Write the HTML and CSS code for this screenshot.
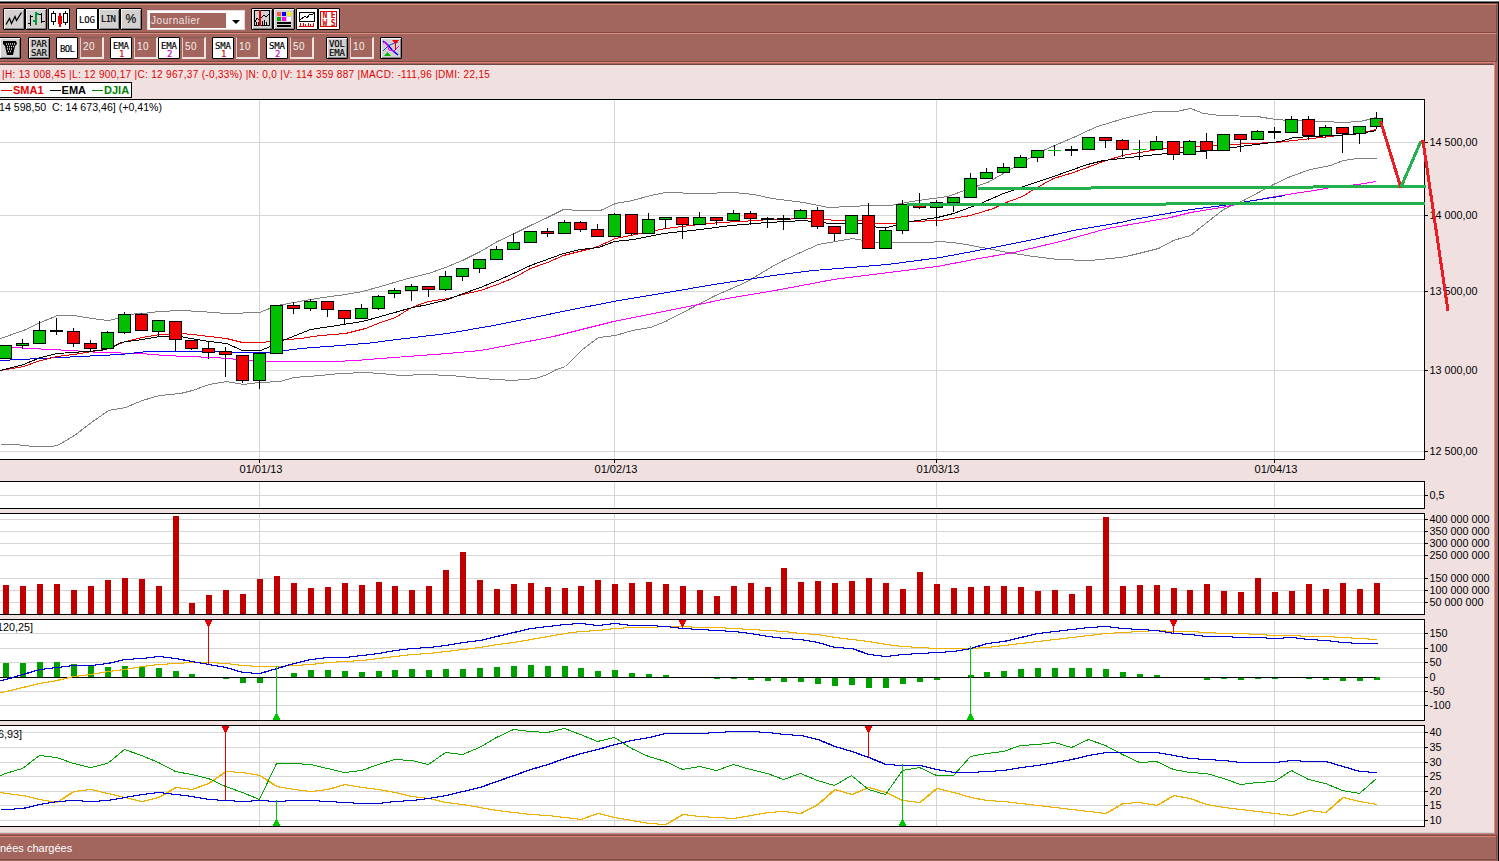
FILE: index.html
```html
<!DOCTYPE html>
<html lang="fr">
<head>
<meta charset="utf-8">
<title>DJIA - Journalier</title>
<link rel="stylesheet" href="styles.css">
</head>
<body>
<div class="window">
  <div class="app">
    <div class="toolbar toolbar-main">
      <button class="btn g3"><svg viewBox="0 0 22 22"><path class="ln" d="M3 16.500 6.500 10.500 8.500 15.500 12 8.500 13.500 12.500 18.500 4.500"/></svg></button>
      <button class="btn"><svg viewBox="0 0 22 22" shape-rendering="crispEdges"><path class="s1" d="M5.500 7v11M3 15.500h3M6 8.500h2M16.500 5v10M14 6.500h3M17 13.500h3"/><path class="sg" d="M11 4v13M8 13h3M11 6h3"/></svg></button>
      <button class="btn on g1"><svg viewBox="0 0 22 22" shape-rendering="crispEdges"><path class="s1" d="M5.500 3v14M17.500 3v14"/><path class="sr" d="M11.500 5v14"/><path class="bx" d="M3.500 5.500h4v8h-4zM15.500 5.500h4v9h-4z"/><path class="fr" d="M10 8h4v8h-4z"/></svg></button>
      <button class="btn on g6"><svg viewBox="0 0 22 22"><text x="3" y="15" textLength="16">LOG</text></svg></button>
      <button class="btn"><svg viewBox="0 0 22 22"><text x="3" y="14" textLength="15">LIN</text></svg></button>
      <button class="btn"><svg viewBox="0 0 22 22"><text class="pct" x="5.500" y="15">%</text></svg></button>
      <div class="select"><span>Journalier</span><i></i></div>
      <button class="btn g6"><svg viewBox="0 0 22 22" shape-rendering="crispEdges"><path class="s1" d="M3.500 2.500h15v15h-15z"/><path class="s1" d="M4 13.500 6 10 8 12 13 7 15 9 18 6M5.500 17v-3M7.500 17v-3M11.500 17v-4M13.500 17v-5M15.500 17v-3"/><path class="sr" d="M9 2v16"/></svg></button>
      <button class="btn"><svg viewBox="0 0 22 22" shape-rendering="crispEdges"><path d="M4 4h4v4H4z" fill="#f55"/><path d="M9 4h4v4H9z" fill="#00f"/><path d="M14 4h4v4h-4z" fill="#f5f400"/><path d="M4 9h4v4H4z" fill="#0a0"/><path d="M9 9h4v4H9z" fill="#f0f"/><path d="M14 9h4v4h-4z" fill="#fff"/><path class="s2" d="M4 15h14M4 18h14"/></svg></button>
      <button class="btn on g1"><svg viewBox="0 0 22 22" shape-rendering="crispEdges"><path class="bx" d="M3.500 4.500h15v9h-15z"/><path class="s1" d="M4 12 9 8 11 10 14 6 16 7 18 5"/><path class="srn" d="M3 18.500h15M4.500 18v-3M7.500 18v-3M9.500 18v-2M12.500 18v-3M14.500 18v-2M17.500 18v-3"/></svg></button>
      <button class="btn on"><svg viewBox="0 0 22 22"><path class="srn" shape-rendering="crispEdges" d="M2.500 3.500h16v15h-16z"/><text class="news" x="4.500" y="10" textLength="13">NE</text><text class="news" x="4.500" y="17.500" textLength="13">WS</text></svg></button>
    </div>
    <div class="toolbar toolbar-indicators">
      <button class="btn"><svg viewBox="0 0 22 22"><path d="M4 4h13l1 3-2 2-2 9H8L6 9 4 7z" fill="#000"/><path d="M7 7h9M8 9.500h7M8 12h6M9 14.500h4" stroke="#ddd" stroke-width="1.300" stroke-dasharray="1 1"/></svg></button>
      <button class="btn"><svg viewBox="0 0 22 22"><text x="3" y="10" textLength="16">PAR</text><text x="3" y="19" textLength="16">SAR</text></svg></button>
      <button class="btn on g6"><svg viewBox="0 0 22 22"><text x="4" y="15" textLength="15">BOL</text></svg></button>
      <span class="num g2">20</span>
      <button class="btn on g6"><svg viewBox="0 0 22 22"><text x="3" y="12" textLength="16">EMA</text><text class="r" x="9" y="20">1</text></svg></button>
      <span class="num g2">10</span>
      <button class="btn on"><svg viewBox="0 0 22 22"><text x="3" y="12" textLength="16">EMA</text><text class="p" x="9" y="20">2</text></svg></button>
      <span class="num g2">50</span>
      <button class="btn on g6"><svg viewBox="0 0 22 22"><text x="3" y="12" textLength="16">SMA</text><text class="r" x="9" y="20">1</text></svg></button>
      <span class="num g2">10</span>
      <button class="btn on g6"><svg viewBox="0 0 22 22"><text x="3" y="12" textLength="16">SMA</text><text class="p" x="9" y="20">2</text></svg></button>
      <span class="num g2">50</span>
      <button class="btn g12"><svg viewBox="0 0 22 22"><text x="3" y="10" textLength="16">VOL</text><text x="3" y="19" textLength="16">EMA</text></svg></button>
      <span class="num g2">10</span>
      <button class="btn g6"><svg viewBox="0 0 22 22"><path d="M3 4 8 8 12 13 18 18" fill="none" stroke="#00f" stroke-width="1.500"/><path d="M3 14 8 9 12 7 18 5" fill="none" stroke="#24c" stroke-width="1"/><path d="M3 6 6 5 9 13 14 14 19 9" fill="none" stroke="#f0f"/><path d="M12 3h7l-3.500 4z" fill="#e00"/><path d="M15.500 6v7" stroke="#e00"/><path d="M4 19h7l-3.500-4z" fill="#0b0"/></svg></button>
    </div>
    <main class="charts">
      <p class="quote">|H: 13 008,45 |L: 12 900,17 |C: 12 967,37 (-0,33%) |N: 0,0 |V: 114 359 887 |MACD: -111,96 |DMI: 22,15</p>
      <div class="legend"><span class="k sma">SMA1</span><span class="k ema">EMA</span><span class="k djia">DJIA</span></div>
      <svg class="panel" id="price" width="1490" height="378" viewBox="0 99 1490 378"></svg>
      <svg class="panel" id="news" width="1490" height="28" viewBox="0 481 1490 28"></svg>
      <svg class="panel" id="volume" width="1490" height="102" viewBox="0 513 1490 102"></svg>
      <svg class="panel" id="macd" width="1490" height="102" viewBox="0 619 1490 102"></svg>
      <svg class="panel" id="dmi" width="1490" height="102" viewBox="0 725 1490 102"></svg>
    </main>
    <footer class="status">nées chargées</footer>
  </div>
</div>
<script src="chart.js"></script>
</body>
</html>
```
FILE: styles.css
```css
* { box-sizing: border-box; }
body { margin: 0; background: #a2665e; font-family: "Liberation Sans", Arial, sans-serif; font-size: 10px; overflow: hidden; }
.window { width: 1499px; height: 861px; overflow: hidden; border-top: 1px solid #fff; background: #000; padding: 2px 1px 0 0; box-shadow: inset 0 1px #777; }
.app { display: flex; flex-direction: column; height: 858px; border-top: 1px solid #7a4a44; background: #a2665e; padding-right: 1px; }
.toolbar { display: flex; flex: none; align-items: flex-start; height: 29px; padding-top: 3px; border-top: 1px solid #e38d7e; border-bottom: 1px solid #7a4a44; border-right: 1px solid #7a4a44; }
.btn { width: 22px; height: 22px; flex: none; padding: 0; border: 1px solid #000; border-radius: 1px; background: #d4d0d0; box-shadow: inset 1px 1px #f4f4f4, inset -1px -1px #8a8a8a; }
.btn.on { background: #fff; box-shadow: none; }
.btn svg { display: block; width: 22px; height: 22px; margin: -1px; }
.btn text { font-family: "DejaVu Sans Mono", monospace; font-size: 9px; fill: #000; stroke: #000; stroke-width: .15px; }
.btn .pct { font-family: "Liberation Sans", Arial, sans-serif; font-size: 12px; }
.btn .news { font-size: 8px; font-weight: bold; fill: #e00000; stroke: none; }
.btn .r { fill: #e00000; stroke: #e00000; }
.btn .p { fill: #c000c0; stroke: #c000c0; }
.ln, .s1, .bx { fill: none; stroke: #000; stroke-width: 1; }
.ln { stroke-width: 1.3; }
.s2 { stroke: #000; stroke-width: 2; }
.bx { fill: #fff; }
.fr { fill: #e00000; }
.sg { fill: none; stroke: #009a3c; stroke-width: 2; }
.sr { fill: none; stroke: #e00000; stroke-width: 2; }
.srn { fill: none; stroke: #e00000; }
.g1 { margin-left: 1px; }
.g2 { margin-left: 2px; }
.g3 { margin-left: 3px; }
.g6 { margin-left: 6px; }
.g12 { margin-left: 12px; }
.select { display: flex; align-items: center; justify-content: space-between; width: 98px; height: 20px; margin: 2px 0 0 5px; padding: 1px 4px 1px 2px; background: #fff; border: 1px solid #e4dada; }
.select span { width: 76px; height: 15px; padding-left: 1px; background: #a2665e; color: #f2e4e2; line-height: 15px; letter-spacing: .55px; }
.select i { border: 4px solid transparent; border-top-color: #000; border-bottom: 0; margin-top: 3px; }
.num { width: 24px; height: 22px; flex: none; border: 2px solid #efe2e0; border-top: 1px solid #8b5750; border-left: 1px solid #e0c8c4; background: #a2665e; color: #f8eeec; line-height: 18px; padding-left: 2px; letter-spacing: .4px; }
.toolbar-indicators .btn:first-child { margin-left: -1px; }
.toolbar-indicators .btn:nth-child(2) { margin-left: 7px; }
.charts { display: flex; flex: none; flex-direction: column; height: 772px; border-top: 1px solid #e38078; border-right: 1px solid #e38d7e; border-bottom: 1px solid #c98078; background: #f0e0e0; box-shadow: inset 0 1px #a2665e, inset 0 2px #6e4640, inset 0 -1px #cfd6d8; padding-top: 3px; width: 1495px; }
.quote { margin: 0; flex: none; height: 16px; padding-left: 2px; line-height: 18px; color: #e00000; white-space: pre; letter-spacing: .32px; }
.legend { display: flex; flex: none; align-items: center; width: 132px; height: 16px; margin-bottom: 1px; border: 1px solid #000; border-left: 0; background: #fff; font-weight: bold; font-size: 11px; }
.k { display: flex; align-items: center; gap: 1px; margin-left: 1px; }
.k + .k { margin-left: 6px; }
.k::before { content: ""; width: 11px; height: 1px; background: currentColor; }
.sma { color: #e80000; }
.ema { color: #000; }
.djia { color: #008000; }
.panel { display: block; flex: none; overflow: visible; margin-bottom: 4px; }
.panel text { font-size: 10px; fill: #000; white-space: pre; }
.status { flex: none; height: 25px; margin-top: 1px; border-top: 1px solid #7a4a44; border-right: 1px solid #7a4a44; border-bottom: 1px solid #7a4a44; box-shadow: inset 0 1px #e38078; color: #fff; font-size: 11px; line-height: 24px; }
```
FILE: chart.js
```js
const NS = 'http://www.w3.org/2000/svg';
const cx = i => Math.floor(5.85 + 16.916 * i);
const RIGHT = 1424;
const DATES = [[15, '01/01/13'], [36, '01/02/13'], [55, '01/03/13'], [75, '01/04/13']];

function add(svg, tag, attrs, text) {
  const el = document.createElementNS(NS, tag);
  for (const k in attrs) el.setAttribute(k, attrs[k]);
  if (text !== undefined) el.textContent = text;
  svg.appendChild(el);
  return el;
}
const rect = (svg, x, y, w, h, fill) => add(svg, 'rect', { x, y, width: w, height: h, fill, 'shape-rendering': 'crispEdges' });
const line = (svg, pts, stroke, w = 1) => add(svg, 'polyline', {
  points: pts.map(p => p[0] + .5 + ',' + (Math.round(p[1]) + .5)).join(' '),
  fill: 'none', stroke, 'stroke-width': w, 'shape-rendering': 'crispEdges' });
const pairs = s => s.trim().split(/\s+/).map(p => p.split(',').map(Number));
const nums = s => s.trim().split(/\s+/).map(Number);

// Width of an axis label in pixels
const labelWidth = t => [...t].reduce((n, c) => n + (/\d/.test(c) ? 6 : 3), 0);

function grid(svg, top, bottom, rows) {
  rect(svg, 0, top, RIGHT, bottom - top, '#fff');
  for (const [y] of rows) rect(svg, 0, y, RIGHT, 1, '#d6d6d6');
  for (const [i] of DATES) rect(svg, cx(i), top, 1, bottom - top, '#d6d6d6');
}
function frame(svg, top, bottom, rows) {
  rect(svg, 0, top, RIGHT + 1, 1, '#000');
  rect(svg, 0, bottom, RIGHT + 1, 1, '#000');
  rect(svg, RIGHT, top, 1, bottom - top, '#000');
  for (const [y, t] of rows) {
    rect(svg, RIGHT, y, 4, 1, '#000');
    add(svg, 'text', { x: 1429.5, y: y + 4, textLength: labelWidth(t), lengthAdjust: 'spacingAndGlyphs' }, t);
  }
}
function series(svg, first, ys, color, heavy) {
  const pts = nums(ys).map((y, i) => [cx(i), y]);
  pts.unshift([0, first]);
  line(svg, pts, color);
  if (heavy) line(svg, pts.map(([x, y]) => [x + 1, y]), color);
}
function sell(svg, i, top, end) {
  const x = cx(i);
  rect(svg, x, top, 1, end - top, '#e00000');
  add(svg, 'path', { d: `M${x - 3} ${top}h7v2h-1v2h-1v2h-3v-2h-1v-2h-1z`, fill: '#e80000', 'shape-rendering': 'crispEdges' });
}
function buy(svg, i, start, bottom) {
  const x = cx(i);
  rect(svg, x, start, 1, bottom - start, '#00c800');
  add(svg, 'path', { d: `M${x - 3} ${bottom}h7v-2h-1v-2h-1v-2h-3v2h-1v2h-1z`, fill: '#00c800', 'shape-rendering': 'crispEdges' });
}

/* ---- price ---- */
const price = document.getElementById('price');
const priceRows = [[142, '14 500,00'], [215, '14 000,00'], [291, '13 500,00'], [370, '13 000,00'], [451, '12 500,00']];
grid(price, 99, 459, priceRows);

line(price, pairs(`0,338 23,330 40,322 57,315 74,315 91,318 108,320 117,318 125,314 142,313 159,311 180,310 200,311 226,313 259,312 277,305 310,299 330,296 345,294 362,291 380,286 411,277 428,273 445,267 462,260 480,251 497,241 514,233 530,225 547,217 563,209 580,210 600,210 615,203 632,200 650,195 665,192 700,193 733,192 753,194 772,198 803,202 828,207 870,205 890,205 911,201 947,196 970,188 987,182 1003,173 1022,162 1030,157 1043,150 1054,145 1073,137 1088,130 1097,126 1120,119 1135,115 1154,111 1176,111 1190,108 1203,113 1220,115 1257,116 1275,119 1290,120 1325,121 1342,122 1360,121 1376,117`), '#808080');
line(price, pairs(`0,444 15,444 33,446 50,446 57,445 74,435 91,422 108,410 125,407 142,400 159,395 180,393 192,390 209,384 226,381 243,384 259,382 280,381 293,377 320,375 340,373 365,372 380,373 400,375 425,374 450,375 480,378 512,380 535,378 547,374 556,369 565,366 582,349 598,337 615,335 632,330 650,327 665,321 692,307 715,295 745,282 752,278 770,267 783,260 800,252 818,244 835,241 852,238 863,240 871,242 927,242 940,241 960,243 987,248 1007,252 1033,256 1057,259 1090,260 1120,257 1130,255 1158,248 1173,240 1190,235 1200,227 1223,209 1243,200 1273,184 1290,176 1310,169 1330,165 1343,160 1357,158 1376,158`), '#808080');
line(price, pairs(`0,346 30,348 70,350 100,352 140,353 165,355 185,356 215,357 238,359 250,360 272,361 335,361 355,360 380,358 447,353 480,350 507,345 553,336 593,326 613,321 653,313 693,305 727,298 780,289 833,279 937,266 973,259 1013,252 1060,241 1107,228 1170,217 1190,212 1227,206 1247,201 1287,194 1320,189 1330,187 1357,184 1376,181`), '#f0f');
line(price, pairs(`0,360 60,357 120,354 147,351 180,351 270,352 300,348 340,345 375,342 380,341 447,333 493,325 533,317 567,310 613,301 673,291 713,284 747,279 773,275 813,270 887,264 940,257 993,247 1033,239 1073,230 1120,222 1133,219 1190,209 1223,205 1253,200 1285,195`), '#0000e8');
line(price, pairs(`0,370 23,366 40,360 57,356 80,353 98,350 108,348 117,344 125,341 142,337 159,334 180,333 192,334 226,338 242,342 262,342 276,340 300,338 320,335 345,333 365,328 380,322 395,317 411,307 428,301 448,298 462,294 480,290 497,284 514,277 530,268 547,262 563,255 595,247 615,238 640,233 665,228 690,225 720,222 740,221 770,219 787,219 800,217 820,219 840,220 860,220 873,223 893,223 910,221 940,220 970,215 993,208 1003,203 1022,196 1033,189 1053,178 1073,172 1103,161 1122,155 1140,152 1157,149 1180,147 1220,145 1247,143 1277,142 1293,140 1320,137 1347,134 1360,133 1376,129`), '#e80000');
line(price, pairs(`0,370 23,364 40,357 57,353 100,350 112,347 120,342 142,339 159,336 180,336 190,338 209,341 226,343 242,350 260,350 270,346 285,339 310,329 330,326 362,321 380,316 412,307 428,304 447,299 463,293 480,287 497,280 513,273 530,265 563,253 580,249 598,247 614,241 633,239 663,233 700,229 730,225 767,222 787,221 803,220 830,223 863,223 877,227 887,227 910,221 937,217 953,213 980,203 1003,193 1023,186 1053,176 1087,164 1103,160 1147,155 1167,153 1213,150 1247,145 1280,141 1293,137 1353,134 1376,130`), '#000');

// index: colour, high, body top, body bottom, low  (g = up, r = down, d = doji, t = flat up day)
const candles = `g345,345,359,359 g339,343,346,349 g321,330,344,344 d318,330,332,335 r328,331,344,347 r340,343,349,352 g331,332,349,349 g312,314,333,334 r313,314,331,331 g320,320,332,336 r321,321,340,351 r340,340,349,350 r341,348,353,359 r347,351,355,377 r355,355,381,383 g352,353,381,389 g305,305,354,354 r302,305,309,314 g299,301,309,311 r301,301,310,317 r310,310,319,324 g304,308,319,319 g295,296,309,310 g288,290,294,298 g284,286,291,301 r286,286,290,297 g271,276,290,291 g268,268,277,281 g259,259,269,273 g246,249,260,260 g233,242,250,250 g231,231,243,243 r228,231,234,237 g220,222,234,234 r221,222,230,232 r224,229,237,237 g213,214,237,237 r214,214,234,236 g213,219,234,234 g217,217,220,229 r217,217,225,239 g212,217,225,225 r217,217,221,225 g210,213,221,221 r211,213,219,225 d217,218,220,228 d215,218,220,230 g209,210,219,219 r207,210,227,229 r226,226,234,241 g215,215,234,234 r203,215,249,249 g227,230,249,249 g200,204,231,234 r193,204,208,209 g200,202,208,226 g197,197,203,212 g173,178,198,198 g168,172,179,179 g163,167,173,173 g155,157,168,168 g150,150,158,162 t145,150,151,156 d146,149,151,156 g137,137,150,150 r137,137,141,148 r139,140,150,157 t140,149,150,160 g136,141,150,150 r141,141,155,160 g140,141,155,155 r133,141,151,159 g134,134,151,151 r134,134,140,152 g130,131,140,140 d127,131,133,139 g116,119,133,133 r116,119,136,140 g125,127,136,138 r127,127,134,153 g126,126,134,144 g112,118,127,129`.split(' ');
candles.forEach((s, i) => {
  const [hi, top, bot, lo] = s.slice(1).split(',').map(Number);
  const x = cx(i), kind = s[0];
  rect(price, x, hi, 1, lo - hi, '#000');
  if (kind === 't') return rect(price, x - 6, top, 13, 1, '#00c000');
  rect(price, x - 6, top, 13, bot - top, '#000');
  if (kind !== 'd') rect(price, x - 5, top + 1, 11, bot - top - 2, kind === 'g' ? '#00c000' : '#f00000');
});
frame(price, 99, 459, priceRows);
for (const [i, t] of DATES) {
  rect(price, cx(i), 459, 1, 4, '#000');
  add(price, 'text', { x: cx(i) - 19.5, y: 473, textLength: 43, lengthAdjust: 'spacingAndGlyphs' }, t);
}
add(price, 'text', { x: -1, y: 111, textLength: 163, lengthAdjust: 'spacingAndGlyphs' }, '14 598,50  C: 14 673,46] (+0,41%)');

// hand-drawn supports and scenario
const GREEN = '#22b14c', RED = '#ed1c24';
const draw = (d, stroke) => add(price, 'path', { d, stroke, fill: 'none', 'stroke-width': 3, 'shape-rendering': 'crispEdges' });
draw('M978 188.5H1091M1091 187.5H1313M1313 186.5H1426M907 204.5H1166M1166 203.5H1425', GREEN);
draw('M1380.500 121 1401 188', RED);
draw('M1401 187 1421 141', GREEN);
draw('M1421 141.500H1424M1423 141 1448 311', RED);

/* ---- news ---- */
const news = document.getElementById('news');
grid(news, 481, 508, [[495]]);
frame(news, 481, 508, [[495, '0,5']]);

/* ---- volume ---- */
const volume = document.getElementById('volume');
const volRows = [[519, '400 000 000'], [531, '350 000 000'], [543, '300 000 000'], [555, '250 000 000'], [578, '150 000 000'], [590, '100 000 000'], [602, '50 000 000']];
grid(volume, 513, 614, volRows);
nums(`585 586 584 584 590 586 580 578 579 586 516 603 595 590 594 579 576 583 588 587 583 585 582 586 590 586 570 552 580 589
584 583 587 588 586 580 584 583 582 584 586 590 596 586 583 587 568 582 581 583 581 578 583 589 572 584 588 587 586
586 587 591 590 594 586 517 586 585 585 588 590 584 591 592 578 592 591 584 589 583 589 583`)
  .forEach((y, i) => rect(volume, cx(i) - 2, y, 6, 614 - y, '#c00000'));
frame(volume, 513, 614, volRows);

/* ---- macd ---- */
const macd = document.getElementById('macd');
const macdRows = [[633, '150'], [648, '100'], [662, '50'], [677, '0'], [691, '-50'], [705, '-100']];
grid(macd, 619, 720, macdRows);
nums(`663 663 662 662 664 665 667 666 666 668 671 674 677 679 683 683 677 673 670 670 671 672 671 670 669 670 669 669 668 667
666 665 666 666 668 671 670 673 674 675 677 677 679 679 680 681 682 682 684 686 685 688 688 684 682 680 677 675 672
671 669 668 668 668 668 669 672 674 675 677 677 680 679 680 679 679 677 679 680 681 681 680`)
  .forEach((y, i) => { if (y !== 677) rect(macd, cx(i) - 2, Math.min(y, 677), 6, Math.abs(y - 677), '#00a000'); });
rect(macd, 0, 677, 1376, 1, '#000');
series(macd, 692, `691 687 683 680 676 674 671 669 666 664 663 662 662 663 665 666 666 665 664 662 661 660 658 656 654 653 651 649 647 644
642 639 636 633 631 630 628 627 627 626 626 627 627 628 629 630 631 633 634 637 639 641 644 646 647 648 648 648 647
645 643 641 639 637 635 633 632 631 630 631 631 632 633 633 634 635 635 636 636 637 638 639`, '#f0b000', true);
series(macd, 680, `679 674 669 667 665 665 663 659 658 656 658 661 664 667 672 673 668 663 659 657 657 655 653 650 648 647 645 642 640 636
632 628 626 624 623 625 623 625 625 626 628 629 630 631 633 636 638 639 642 647 648 654 656 654 653 652 651 648 643
641 637 633 631 629 627 626 628 629 630 633 634 636 636 637 637 638 637 639 640 642 643 643`, '#0000d0', true);
sell(macd, 12, 620, 664);
buy(macd, 16, 666, 720);
sell(macd, 40, 620, 628);
buy(macd, 57, 646, 720);
sell(macd, 69, 620, 633);
frame(macd, 619, 720, macdRows);
add(macd, 'text', { x: 33, y: 631, 'text-anchor': 'end', textLength: 36, lengthAdjust: 'spacingAndGlyphs' }, '120,25]');

/* ---- dmi ---- */
const dmi = document.getElementById('dmi');
const dmiRows = [[732, '40'], [747, '35'], [762, '30'], [776, '25'], [791, '20'], [805, '15'], [820, '10']];
grid(dmi, 725, 826, dmiRows);
series(dmi, 792, `793 795 799 802 791 789 793 797 801 797 787 789 783 771 772 775 786 789 791 789 784 787 789 792 796 798 802 804 807 810
812 814 815 817 819 813 817 820 823 824 814 816 817 818 815 812 811 813 804 789 794 787 792 800 802 788 792 797 800
801 803 805 807 809 811 813 803 802 805 795 798 804 807 809 811 813 815 810 812 797 801 804`, '#f0b000', true);
series(dmi, 775, `773 768 755 757 763 767 763 749 755 762 771 774 778 786 792 799 763 763 764 768 772 770 764 759 760 764 752 754 747 737
729 731 732 728 734 741 737 748 756 761 769 766 770 764 769 773 779 773 780 785 775 789 794 770 767 775 775 756 753
751 745 744 742 747 739 745 754 762 761 769 772 773 778 784 782 781 770 779 783 790 793 778`, '#00a000');
series(dmi, 809, `809 808 804 801 800 801 800 797 794 792 794 796 799 800 801 800 801 800 800 801 802 803 803 801 800 798 795 791 787 781
775 769 764 758 753 749 744 740 737 733 733 733 732 731 731 732 734 735 739 746 751 757 764 765 765 769 772 772 771
770 767 765 762 759 755 752 752 752 752 755 758 759 760 762 762 762 760 761 761 766 771 772`, '#0000d0', true);
sell(dmi, 13, 726, 800);
buy(dmi, 16, 800, 826);
sell(dmi, 51, 726, 757);
buy(dmi, 53, 764, 826);
frame(dmi, 725, 826, dmiRows);
add(dmi, 'text', { x: 22, y: 738, 'text-anchor': 'end', textLength: 24, lengthAdjust: 'spacingAndGlyphs' }, '6,93]');
```
